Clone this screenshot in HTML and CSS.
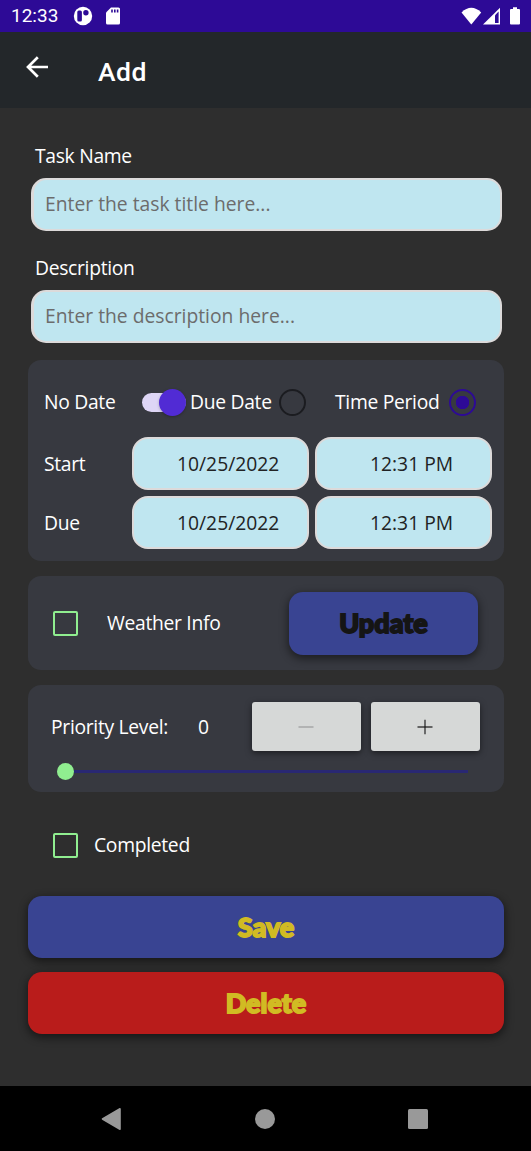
FILE: index.html
```html
<!DOCTYPE html>
<html lang="en">
<head>
<meta charset="utf-8">
<title>Add</title>
<link rel="stylesheet" href="styles.css">
</head>
<body>
<div class="status-bar">
  <span class="clock">12:33</span>
  <svg class="status-app" width="20" height="20" viewBox="0 0 20 20"><circle cx="10" cy="10" r="9.2" fill="#fff"/><rect x="4.3" y="4.5" width="4.6" height="11" rx="1.5" fill="#2d0a96"/><circle cx="12.9" cy="6.7" r="2.7" fill="#2d0a96"/></svg>
  <svg class="status-sd" width="14" height="18" viewBox="0 0 14 18"><path d="M5 0.5H12.4Q14 .5 14 2V16Q14 17.5 12.4 17.5H1.6Q0 17.5 0 16V5.5Z" fill="#fff"/><path d="M6 2.5V5.5M8.8 2.5V5.5M11.6 2.5V5.5" stroke="#2d0a96" stroke-width="1.6"/></svg>
  <svg class="status-signals" width="60" height="20" viewBox="0 0 60 20"><path d="M0.5 6.5Q10.3-2.8 20.2 6.5L10.3 18.4Z" fill="#fff"/><path d="M22 18.5L39 1.8V18.5Z" fill="#fff"/><path d="M34 9.2L37.6 5.5V17H34Z" fill="#2d0a96"/><path d="M52 1.3H56V3H58Q59 3 59 4V17.5Q59 18.5 58 18.5H50Q49 18.5 49 17.5V4Q49 3 50 3H52Z" fill="#fff"/></svg>
</div>
<header class="app-bar">
  <svg width="22" height="22" viewBox="0 0 22 22" fill="none" stroke="#fff" stroke-width="2.7"><path d="M22 11H2M11.8 1.2L2 11L11.8 20.8"/></svg>
  <h1 class="title">Add</h1>
</header>
<main class="form">
  <label class="label field-label t-task">Task Name</label>
  <div class="field placeholder"><span class="p-task">Enter the task title here...</span></div>
  <label class="label field-label t-desc">Description</label>
  <div class="field placeholder"><span class="p-desc">Enter the description here...</span></div>

  <section class="card dates">
    <div class="modes">
      <span class="label mode-none">No Date</span>
      <span class="switch"><span class="knob"></span></span>
      <span class="label mode-due">Due Date</span>
      <span class="radio"></span>
      <span class="label mode-period">Time Period</span>
      <span class="radio selected"></span>
    </div>
    <div class="date-grid">
      <span class="label">Start</span><div class="pick date">10/25/2022</div><div class="pick time">12:31 PM</div>
      <span class="label">Due</span><div class="pick date">10/25/2022</div><div class="pick time">12:31 PM</div>
    </div>
  </section>

  <section class="card weather">
    <span class="check"></span>
    <span class="label weather-label">Weather Info</span>
    <button class="button update"><span>Update</span></button>
  </section>

  <section class="card priority">
    <div class="priority-row">
      <span class="label priority-label">Priority Level:</span>
      <span class="label value">0</span>
      <button class="step disabled"><svg width="16" height="16" viewBox="0 0 16 16"><path d="M.5 8H15.5" stroke="#a9aaaa" stroke-width="1.6"/></svg></button>
      <button class="step"><svg width="16" height="16" viewBox="0 0 16 16"><path d="M.5 8H15.5" stroke="#484848" stroke-width="1.6"/><path d="M8 .7V15.3" stroke="#111" stroke-width="1.1"/></svg></button>
    </div>
    <div class="slider"><span class="thumb"></span><span class="track"></span></div>
  </section>

  <div class="completed"><span class="check"></span><span class="label completed-label">Completed</span></div>
  <button class="button save"><span>Save</span></button>
  <button class="button delete"><span>Delete</span></button>
</main>
<nav class="nav-bar">
  <svg width="20" height="24" viewBox="0 0 20 24"><path d="M19 1.8V22.2L1.5 12Z" fill="#999" stroke="#999" stroke-width="1.6" stroke-linejoin="round"/></svg>
  <span class="home"></span>
  <span class="recent"></span>
</nav>
</body>
</html>
```
FILE: styles.css
```css
* { box-sizing: border-box; }
body {
  margin: 0;
  width: 531px;
  height: 1151px;
  display: flex;
  flex-direction: column;
  overflow: hidden;
  background: #2e2e2e;
  font-family: "Open Sans", sans-serif;
  font-size: 19.3px;
  white-space: nowrap;
}
button { border: 0; padding: 0; display: flex; align-items: center; justify-content: center; }
svg { display: block; flex: none; }

.status-bar { height: 32px; flex: none; display: flex; align-items: center; padding-left: 11px; background: #2d0a96; color: #fff; }
.clock { width: 62px; font: 400 19px/32px Roboto, sans-serif; }
.status-sd { margin-left: 13px; }
.status-signals { margin-left: auto; margin-right: 10px; }

.app-bar { height: 76px; flex: none; display: flex; align-items: center; padding-left: 26px; background: #23272a; color: #fff; }
.app-bar svg { margin-top: -6px; }
.title { margin: 4px 0 0 50px; font: 500 26.5px/32px Roboto, sans-serif; letter-spacing: .5px; }

.form { flex: 1; display: flex; flex-direction: column; padding: 36px 27px 0 28px; }
.label { color: #fff; font-weight: 500; line-height: 24px; letter-spacing: -.3px; }
.field-label { margin: 0 0 10px 7px; }
.field {
  height: 53px;
  margin: 0 2px 0 3px;
  padding-left: 11px;
  border: 2px solid #dcdada;
  border-left-width: 3px;
  border-radius: 15px;
  background: #bfe6f0;
  line-height: 48px;
}
.field + .field-label { margin-top: 25px; }
.placeholder { color: #6c6c6c; }

.card { border-radius: 13px; background: #373940; flex: none; }
.dates { height: 201px; margin-top: 17px; padding: 26px 11px 0 16px; }
.modes { display: flex; align-items: center; height: 32px; }
.mode-none { width: 98px; }
.switch { width: 44px; height: 19px; border-radius: 10px; background: #ded6f6; display: flex; align-items: center; justify-content: flex-end; }
.knob { width: 27px; height: 27px; flex: none; border-radius: 50%; background: #512bd4; box-shadow: 0 1px 3px rgba(0,0,0,.25); }
.mode-due { width: 89px; margin-left: 4px; }
.radio { width: 27px; height: 27px; border: 2.5px solid #1b1c20; border-radius: 50%; flex: none; }
.mode-period { width: 114px; margin-left: 29px; }
.selected { border-color: #2d0a96; background: radial-gradient(circle, #2d0a96 6.4px, transparent 7px); }
.date-grid { display: grid; grid-template-columns: 88px 177px 178px; column-gap: 0; row-gap: 6px; margin-top: 19px; align-items: center; }
.pick { height: 53px; border: 2.5px solid #dcdada; border-radius: 16px; background: #bfe6f0; color: #212324; line-height: 49px; }
.date { padding-left: 43px; }
.time { margin-left: 6px; margin-right: -5px; padding-left: 53px; }

.weather { height: 94px; margin-top: 15px; padding-left: 25px; display: flex; align-items: center; }
.check { width: 25px; height: 25px; flex: none; border: 2.7px solid #90ee90; border-radius: 2px; }
.weather-label { width: 182px; margin-left: 29px; }
.button { border-radius: 14px; flex: none; font: 900 27px/30px Lato, sans-serif; box-shadow: 0 3px 9px 1px rgba(0,0,0,.48); }
.button span { -webkit-text-stroke: 1.8px currentColor; }
.update { width: 189px; height: 63px; background: #394492; color: #151515; }

.priority { height: 107px; margin-top: 15px; padding: 17px 24px 0 23px; }
.priority-row { display: flex; align-items: center; height: 49px; }
.priority-label { width: 147px; }
.value { width: 54px; }
.step { width: 108.5px; height: 49px; flex: none; border-radius: 3px; background: #d6d8d7; box-shadow: 0 2px 6px rgba(0,0,0,.5); }
.step + .step { margin-left: 10.5px; }
.slider { display: flex; align-items: center; height: 17px; margin: 12px 12px 0 6px; }
.thumb { width: 17px; height: 17px; border-radius: 50%; background: #90ee90; }
.track { flex: 1; height: 3px; background: #292873; }

.completed { display: flex; align-items: center; height: 26px; margin: 40px 0 38px 25px; }
.completed-label { margin-left: 16px; }
.save, .delete { height: 62px; color: #d1bb23; }
.save { background: #394492; }
.delete { margin-top: 14px; background: #b91c1b; }

.nav-bar { height: 65px; flex: none; display: flex; align-items: center; background: #000; padding-left: 101px; }
.home { width: 20px; height: 20px; margin-left: 134px; border-radius: 50%; background: #999; }
.recent { width: 20px; height: 20px; margin-left: 133px; border-radius: 1.5px; background: #999; }
```
